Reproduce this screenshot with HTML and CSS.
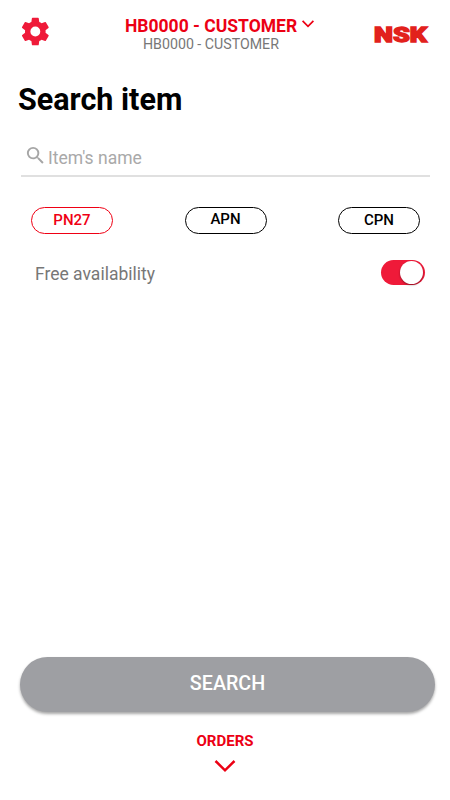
FILE: index.html
```html
<!DOCTYPE html>
<html lang="en">
<head>
<meta charset="utf-8">
<title>Search item</title>
<link rel="stylesheet" href="styles.css">
</head>
<body>
<div class="screen">
  <header class="topbar">
    <button class="settings" aria-label="Settings">
      <svg width="33" height="33" viewBox="0 0 24 24"><path d="M19.300 12.980c.04-.32.07-.64.07-.98s-.03-.66-.07-.98l2.110-1.650a.5.5 0 0 0 .12-.64l-2-3.460a.5.5 0 0 0-.61-.22l-2.490 1a7.300 7.300 0 0 0-1.690-.98l-.38-2.650a.49.49 0 0 0-.49-.42h-4a.49.49 0 0 0-.49.42L9 5.070c-.61.25-1.170.59-1.690.98l-2.490-1a.49.49 0 0 0-.61.22l-2 3.460a.49.49 0 0 0 .12.64l2.110 1.650c-.04.32-.07.65-.07.98s.03.66.07.98l-2.110 1.650a.5.5 0 0 0-.12.64l2 3.460c.12.22.39.3.61.22l2.490-1c.52.4 1.080.73 1.690.98l.38 2.650c.03.24.24.42.49.42h4c.25 0 .46-.18.49-.42l.38-2.650c.61-.25 1.170-.59 1.690-.98l2.490 1c.23.09.49 0 .61-.22l2-3.460a.5.5 0 0 0-.12-.64zM11.870 15.600a3.600 3.600 0 1 1 0-7.200 3.600 3.600 0 0 1 0 7.200z"/></svg>
    </button>
    <div class="account">
      <div class="account-main"><span class="account-name">HB0000 - CUSTOMER</span><svg class="chev" width="14" height="10" viewBox="0 0 14 10"><path d="M1.600 1.900L7 7.300l5.400-5.400"/></svg></div>
      <div class="account-sub">HB0000 - CUSTOMER</div>
    </div>
    <svg class="logo" width="60" height="30" viewBox="0 0 60 30"><text x="3" y="22" textLength="53" lengthAdjust="spacingAndGlyphs">NSK</text></svg>
  </header>
  <h1 class="title">Search item</h1>
  <label class="field">
    <svg width="23" height="23" viewBox="0 0 24 24"><path d="M15.500 14h-.79l-.28-.27A6.470 6.470 0 0 0 16 9.500 6.500 6.500 0 1 0 9.500 16c1.610 0 3.090-.59 4.230-1.570l.27.28v.79l5 4.990L20.490 19l-4.990-5zm-6 0A4.500 4.500 0 1 1 14 9.500 4.490 4.490 0 0 1 9.500 14z"/></svg>
    <span class="placeholder">Item's name</span>
  </label>
  <div class="chips">
    <button class="chip chip-active">PN27</button>
    <button class="chip chip-raised">APN</button>
    <button class="chip">CPN</button>
  </div>
  <div class="option">
    <span class="option-label">Free availability</span>
    <span class="switch"><span class="knob"></span></span>
  </div>
  <button class="search">SEARCH</button>
  <footer class="orders">
    <span class="orders-label">ORDERS</span>
    <svg width="22" height="14" viewBox="0 0 22 14"><path d="M1.500 2L11 11.300 20.500 2"/></svg>
  </footer>
</div>
</body>
</html>
```
FILE: styles.css
```css
* { box-sizing: border-box; }
body { margin: 0; background: #fff; font-family: Roboto, sans-serif; }
button { background: none; border: 0; padding: 0; margin: 0; font-family: inherit; display: block; }
svg { display: block; flex: none; }
.screen { width: 450px; height: 800px; display: flex; flex-direction: column; overflow: hidden; }

.topbar { height: 62px; display: flex; align-items: flex-start; flex: none; }
.settings { margin: 15px 0 0 19px; fill: #ef1a39; }
.account { margin: 16px 0 0 73px; width: 190px; }
.account-main { display: flex; height: 20px; line-height: 20px; color: #ec0014; font-size: 17.500px; font-weight: 700; white-space: nowrap; }
.account-name { width: 178px; }
.chev { margin-top: 3px; fill: none; stroke: #ec0014; stroke-width: 1.700; }
.account-sub { margin-left: 18px; line-height: 17px; color: #777; font-size: 14.200px; }
.logo { margin: 20px 0 0 56px; }
.logo text { font-family: Roboto, sans-serif; font-weight: 900; font-size: 20px; fill: #e2211c; stroke: #e2211c; stroke-width: 1.300; }

.title { margin: 18px 0 0 18px; height: 40px; line-height: 40px; font-size: 30.500px; font-weight: 700; color: #000; }
.field { display: flex; margin: 20px 20px 0 21px; height: 37px; border-bottom: 2px solid #e0e0e0; padding: 4px 0 0 3px; }
.field svg { fill: #a6a6a6; }
.placeholder { margin-left: 1px; padding-top: 3px; line-height: 23px; font-size: 17.500px; color: #a9a9a9; }

.chips { display: flex; justify-content: space-between; margin: 30px 30px 0 31px; }
.chip { width: 82px; height: 27px; border: 1px solid #000; border-radius: 14px; font-size: 15px; font-weight: 500; line-height: 25px; color: #000; }
.chip-active { color: #ef0014; border-color: #ef0014; }
.chip-raised { padding-bottom: 2px; line-height: 23px; }

.option { display: flex; justify-content: space-between; margin: 26px 25px 0 35px; }
.option-label { line-height: 28px; font-size: 17.500px; color: #777; }
.switch { display: flex; justify-content: flex-end; width: 44px; height: 25px; border-radius: 13px; background: #ef1a39; padding: 1px 2px; }
.knob { width: 23px; height: 23px; border-radius: 50%; background: #fff; box-shadow: 0 1px 2px rgba(0,0,0,.4); }

.search { margin: auto 15px 0 20px; height: 55px; flex: none; border-radius: 28px; background: #9e9fa3; color: #fff; font-size: 19.700px; font-weight: 500; line-height: 53px; padding-bottom: 2px; box-shadow: 0 2px 3px rgba(0,0,0,.35); }
.orders { height: 88px; flex: none; display: flex; flex-direction: column; align-items: center; padding-top: 19px; color: #ec0014; }
.orders-label { line-height: 20px; font-size: 15px; font-weight: 700; }
.orders svg { margin-top: 8px; fill: none; stroke: #ec0014; stroke-width: 2.500; }
```
